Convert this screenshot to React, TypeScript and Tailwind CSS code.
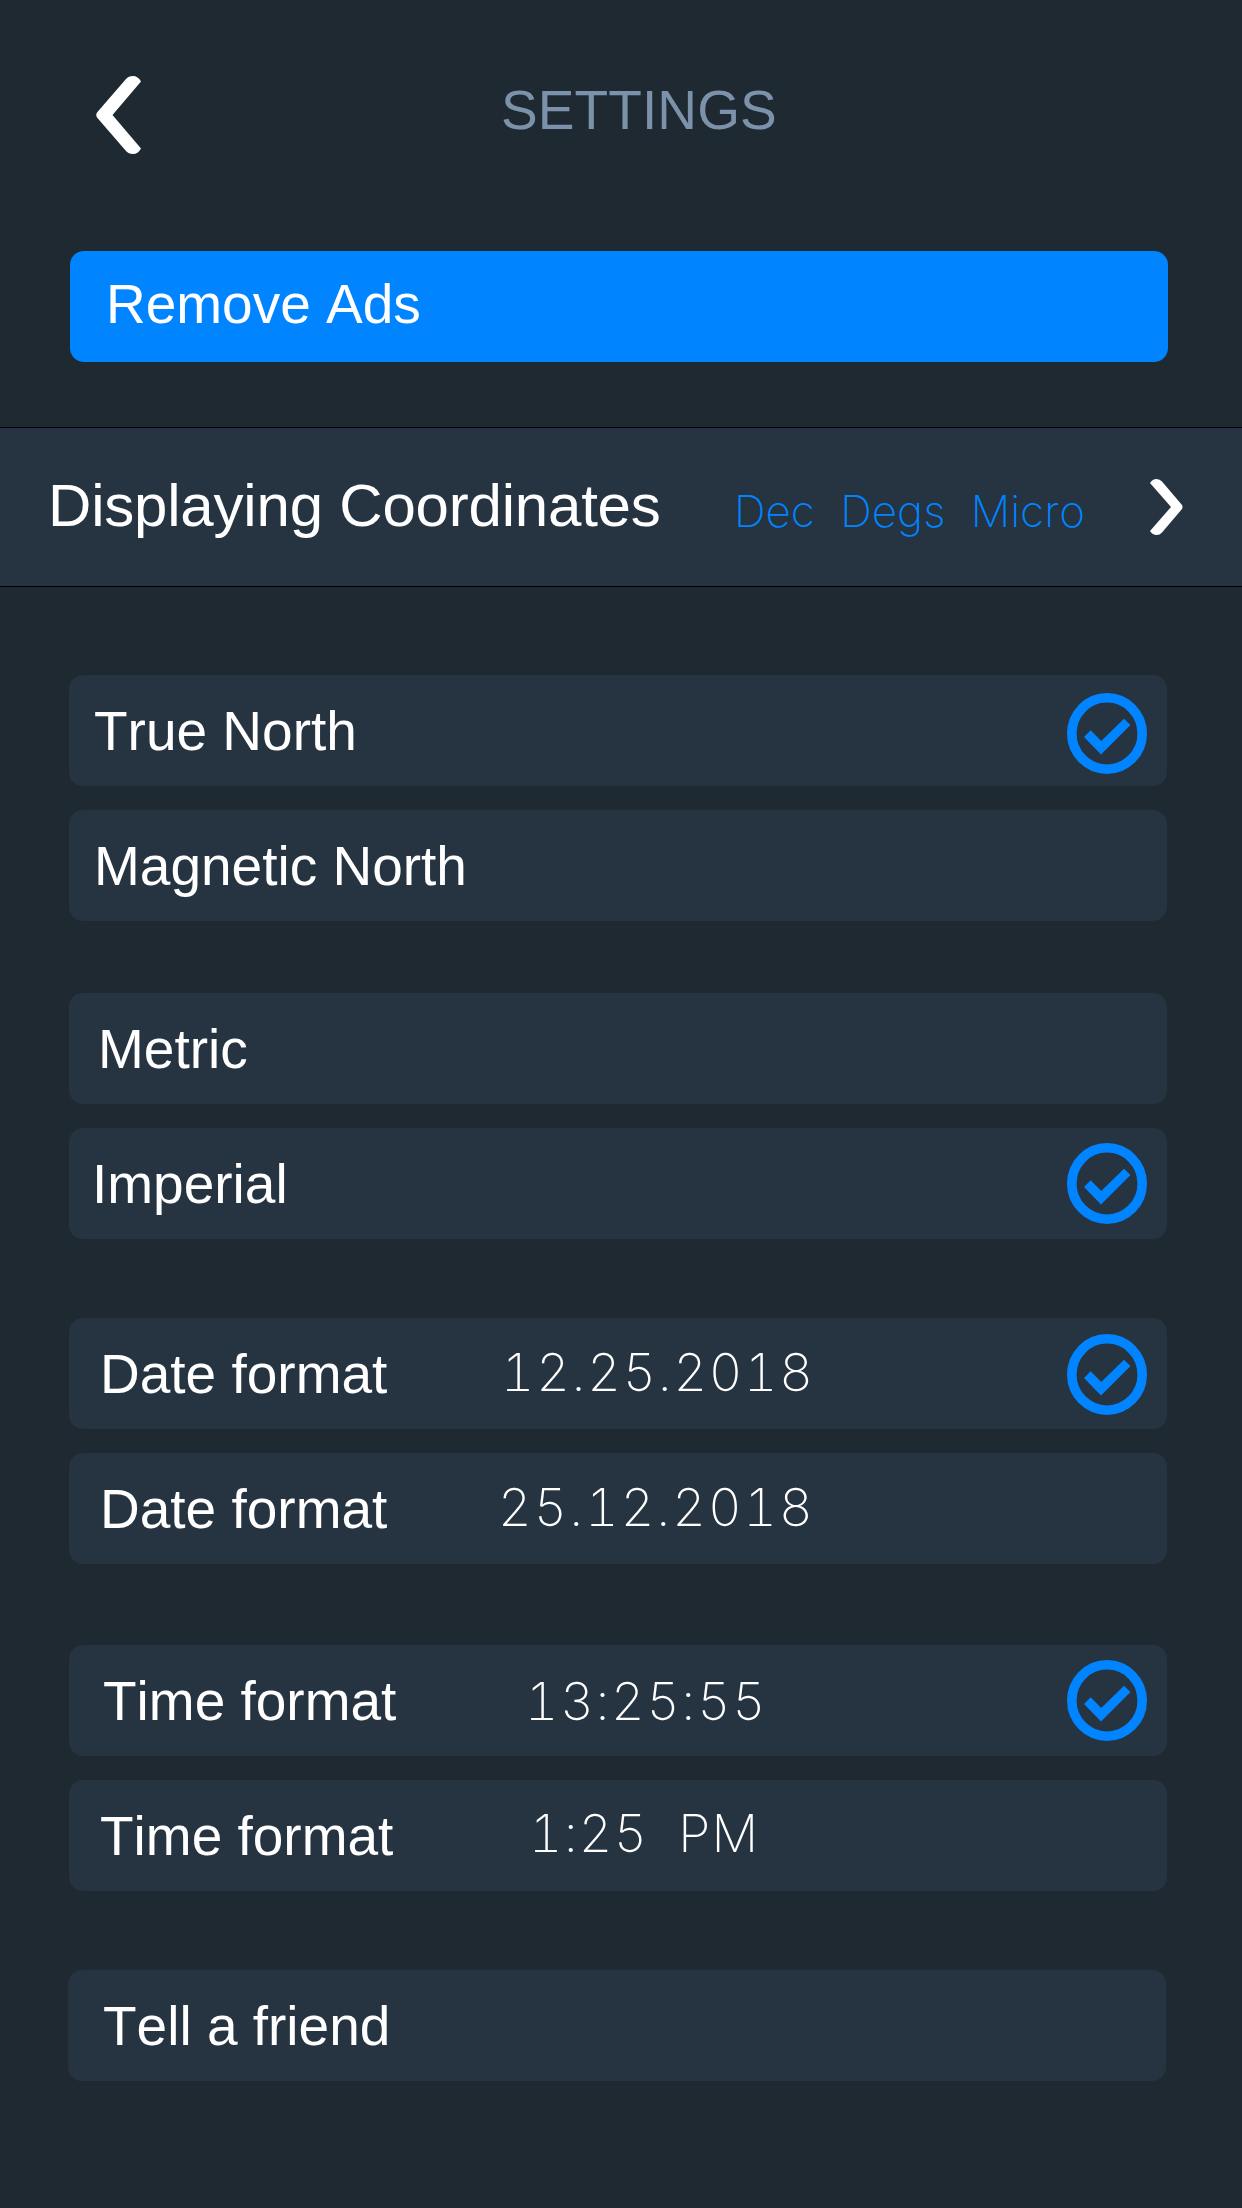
import { clsx } from "clsx"

type Option = {
    label: string
    labelClass: string
    value?: string
    valueClass?: string
    checkClass?: string
}

type OptionGroup = {
    id: string
    className: string
    options: Option[]
}

const groups: OptionGroup[] = [
    {
        id: "north",
        className: "mt-[88px] ml-[69px]",
        options: [
            { label: "True North", labelClass: "pl-[25px]", checkClass: "mt-[6px]" },
            { label: "Magnetic North", labelClass: "pl-[25px]" },
        ],
    },
    {
        id: "units",
        className: "mt-[72px] ml-[69px]",
        options: [
            { label: "Metric", labelClass: "pl-[29px]" },
            { label: "Imperial", labelClass: "pl-[23px]", checkClass: "" },
        ],
    },
    {
        id: "date",
        className: "mt-[79px] ml-[69px]",
        options: [
            { label: "Date format", labelClass: "w-[432px] pl-[31px]", value: "12.25.2018", valueClass: "mb-[1px] tracking-[1.7px]", checkClass: "mt-[2px]" },
            { label: "Date format", labelClass: "w-[429px] pl-[31px]", value: "25.12.2018", valueClass: "mb-[1px] tracking-[2px]" },
        ],
    },
    {
        id: "time",
        className: "mt-[81px] ml-[69px]",
        options: [
            { label: "Time format", labelClass: "w-[456px] pl-[34px]", value: "13:25:55", valueClass: "mt-[2px] tracking-[1.6px]", checkClass: "" },
            { label: "Time format", labelClass: "w-[460px] pl-[31px]", value: "1:25  PM", valueClass: "mb-[3px] tracking-[1.1px]" },
        ],
    },
    {
        id: "share",
        className: "mt-[79px] ml-[68px]",
        options: [{ label: "Tell a friend", labelClass: "pl-[35px]" }],
    },
]

function BackIcon() {
    return (
        <svg className="h-[78px] w-[46px] shrink-0" viewBox="0 0 46 78" fill="#fff">
            <path d="M1 36.5 30 3Q32.500 0 37 0Q42 0 45 5.500L16.500 39 45 72.500Q42 78 37 78Q32.500 78 30 75L1 41.500Q-.500 39 1 36.500Z" />
        </svg>
    )
}

function ForwardIcon() {
    return (
        <svg className="h-[56px] w-[33px] shrink-0" viewBox="0 0 33 56" fill="#fff">
            <path d="M32 26 12 2.500Q10 0 6.500 0Q2.500 0 0 4L21 28 0 52Q2.500 56 6.500 56Q10 56 12 53.500L32 30Q33 28 32 26Z" />
        </svg>
    )
}

function CheckIcon({ className }: { className?: string }) {
    return (
        <svg className={clsx("mr-5 ml-auto h-[81px] w-20 shrink-0", className)} viewBox="0 0 80 81" fill="none">
            <ellipse cx="40" cy="40.500" rx="35.200" ry="35.700" stroke="#0084ff" strokeWidth="9.600" />
            <path d="M17 44 23.700 37.300 34.200 48 57 25.700 63.500 32 34 61.500Z" fill="#0084ff" />
        </svg>
    )
}

function OptionRow({ label, labelClass, value, valueClass, checkClass }: Option) {
    return (
        <button className="flex h-[111px] w-[1098px] items-center rounded-[14px] bg-[#263340] text-left">
            <span className={clsx("shrink-0 pt-px", labelClass)}>{label}</span>
            {value && (
                <span className={clsx("font-['Inter'] text-[52px] font-extralight whitespace-pre tabular-nums", valueClass)}>{value}</span>
            )}
            {checkClass !== undefined && <CheckIcon className={checkClass} />}
        </button>
    )
}

export default function App() {
    return (
        <main className="h-[2208px] w-[1242px] overflow-hidden bg-[#1f2932] font-['Liberation_Sans',sans-serif] text-[55px] leading-none text-white [font-kerning:none]">
            <header className="flex h-[251px] items-start">
                <button className="mt-[76px] ml-[96px]" aria-label="Back">
                    <BackIcon />
                </button>
                <h1 className="mt-[83px] ml-[359px] tracking-[0.1px] text-[#7b92aa]">SETTINGS</h1>
            </header>

            <button className="ml-[70px] flex h-[111px] w-[1098px] items-center rounded-[14px] bg-[#0084ff] pb-[5px] pl-[36px]">
                Remove Ads
            </button>

            <button className="mt-[65px] flex h-[160px] w-full items-center border-y border-black bg-[#263340] text-left">
                <span className="w-[734px] pb-[3px] pl-[48px] text-[60px] tracking-[-0.2px]">Displaying Coordinates</span>
                <span className="w-[416px] pt-[7px] font-['Inter'] text-[44px] font-extralight [word-spacing:0.3px] whitespace-pre text-[#0084ff]">
                    Dec  Degs  Micro
                </span>
                <ForwardIcon />
            </button>

            {groups.map((group) => (
                <section key={group.id} className={clsx("flex flex-col gap-6", group.className)}>
                    {group.options.map((option, i) => (
                        <OptionRow key={i} {...option} />
                    ))}
                </section>
            ))}
        </main>
    )
}
